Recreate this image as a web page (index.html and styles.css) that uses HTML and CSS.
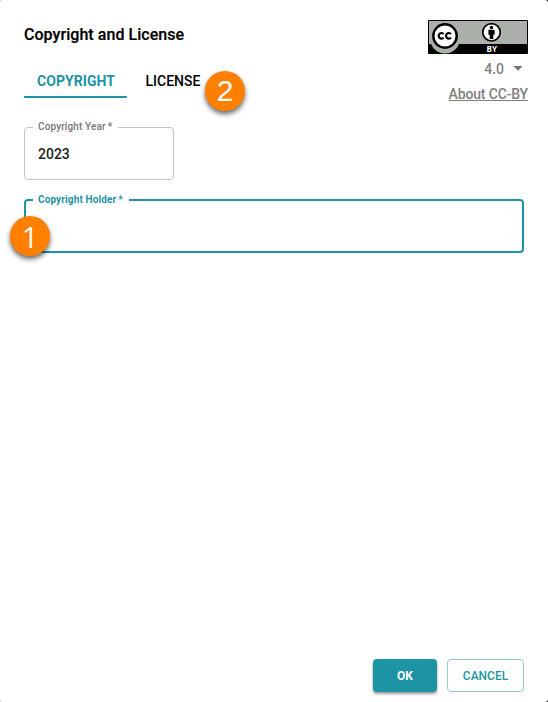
FILE: index.html
```html
<!DOCTYPE html>
<html lang="en">
<head>
<meta charset="utf-8">
<title>Copyright and License</title>
<link rel="stylesheet" href="styles.css">
</head>
<body>
<main class="dialog">
  <header class="top">
    <div class="heading">
      <h1 class="title">Copyright and License</h1>
      <nav class="tabs">
        <span class="tab active">COPYRIGHT</span>
        <span class="tab license">LICENSE<span class="callout two">2</span></span>
      </nav>
    </div>
    <aside class="summary">
      <svg class="cc" width="100" height="34" viewBox="0 0 100 34">
        <rect width="100" height="34" rx="1" fill="#000"/>
        <rect x="1" y="1" width="98" height="23" fill="#abb1aa"/>
        <path d="M3 24a15 15 0 0 0 28 0z" fill="#abb1aa"/>
        <circle cx="17" cy="16" r="11.7" fill="#fff" stroke="#000" stroke-width="2.4"/>
        <g fill="none" stroke="#000" stroke-width="2.2">
          <path d="M15.6 14A2.8 2.8 0 1 0 15.6 17.6"/>
          <path d="M23 14A2.8 2.8 0 1 0 23 17.6"/>
        </g>
        <circle cx="63.5" cy="12.3" r="8.7" fill="#fff" stroke="#000" stroke-width="1.7"/>
        <circle cx="63.5" cy="7.5" r="1.7"/>
        <path d="M61 9.8h5q.6 0 .6.6v4.4h-1.3V19h-3.6v-4.2h-1.3v-4.4q0-.6.6-.6z"/>
        <text class="by" x="63.7" y="31.7" text-anchor="middle">BY</text>
      </svg>
      <div class="version"><span>4.0</span><svg width="10" height="5" viewBox="0 0 10 5"><path d="M.5 0h9L5 4.7z" fill="#757575"/></svg></div>
      <a class="about">About CC-BY</a>
    </aside>
  </header>
  <fieldset class="field year"><legend>Copyright Year<span class="star">*</span></legend><span class="value">2023</span></fieldset>
  <fieldset class="field holder"><legend>Copyright Holder<span class="star">*</span></legend><span class="callout one">1</span></fieldset>
  <footer class="actions">
    <button class="button ok">OK</button>
    <button class="button cancel">CANCEL</button>
  </footer>
</main>
</body>
</html>
```
FILE: styles.css
```css
* { box-sizing: border-box; }
body { margin: 0; background: linear-gradient(90deg, #ccc 50%, #111 50%); font-family: Roboto, sans-serif; }
.dialog { width: 548px; height: 702px; padding: 20px 20px 10px 24px; background: #fff; border-radius: 3px; display: flex; flex-direction: column; }
.top { display: flex; justify-content: space-between; height: 101px; }
.title { margin: 5px 0 0; font-size: 16px; line-height: 20px; font-weight: 500; letter-spacing: .05px; color: #000; -webkit-text-stroke: .2px #000; }
.tabs { display: flex; margin-top: 19px; height: 34px; }
.tab { font-size: 14px; line-height: 34px; font-weight: 500; color: #000; }
.active { width: 103px; padding-left: 1px; text-align: center; color: #1d94a4; font-weight: 700; letter-spacing: .05px; border-bottom: 2px solid #1d94a4; border-radius: 1px; }
.license { position: relative; margin-left: 18.5px; }
.summary { display: flex; flex-direction: column; align-items: flex-end; color: #808080; font-weight: 500; }
.cc { display: block; }
.by { font: 700 8px "Open Sans", sans-serif; fill: #fff; }
.version { display: flex; align-items: center; gap: 9px; margin: 5px 5px 0 0; height: 20px; font-size: 14px; }
.version svg { margin-top: -2px; }
.about { margin-top: 5px; font-size: 14px; line-height: 20px; letter-spacing: -.15px; text-decoration: underline; }
.field { position: relative; margin: 0; min-width: 0; border: 1px solid #c4c4c4; border-radius: 4px; }
.field legend { height: 12px; padding: 0 6px 0 5px; font-size: 10px; line-height: 12px; font-weight: 500; color: #757575; white-space: nowrap; letter-spacing: .13px; }
.star { margin-left: 2px; }
.year { width: 150px; height: 59px; padding: 0 13px 0 8px; }
.value { display: block; margin: 0; padding: 11px 0 0 5px; font-size: 14px; line-height: 20px; font-weight: 500; color: #212121; }
.holder { width: 500px; height: 59px; margin-top: 14px; padding: 0 7px; border: 2px solid #1d94a4; }
.holder legend { color: #1d94a4; font-weight: 700; letter-spacing: .12px; }
.callout { position: absolute; width: 40px; height: 40px; border-radius: 50%; background: #ff8000; color: #fff; font: 400 30px/40px "Liberation Sans", sans-serif; text-align: center; box-shadow: 0 3px 5px rgba(0,0,0,.6); }
.one { left: -16px; top: 10px; font: 400 29px/41px "Open Sans", sans-serif; }
.two { left: 59.5px; top: 7px; }
.actions { display: flex; justify-content: flex-end; gap: 10px; margin: auto 4px 0 0; }
.button { height: 33px; border: 0; border-radius: 4px; padding: 1px 0 0; font: 500 12px/32px Roboto, sans-serif; }
.ok { width: 64px; background: #1d94a4; color: #fff; font-weight: 700; box-shadow: 0 2px 3px rgba(0,0,0,.4); }
.cancel { width: 77px; border: 1px solid #8ecad2; background: #fff; color: #1d94a4; line-height: 30px; }
```
